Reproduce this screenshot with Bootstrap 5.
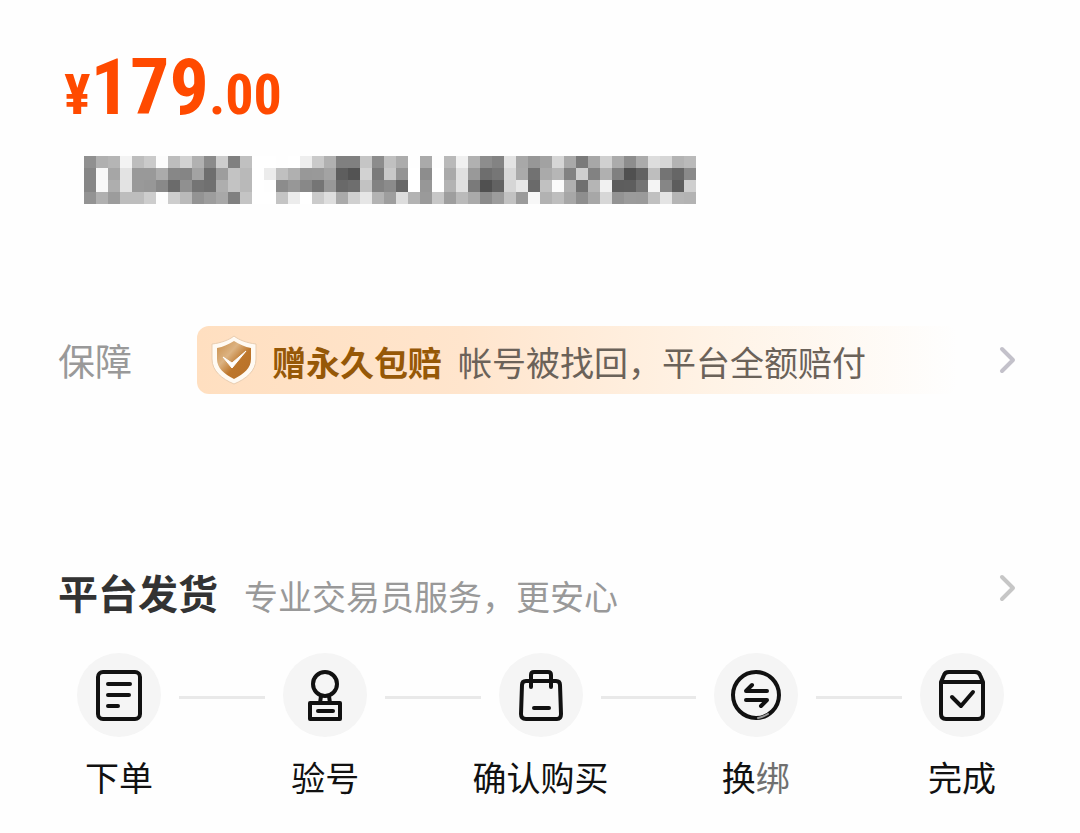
<!DOCTYPE html>
<html lang="zh-CN">
<head>
<meta charset="utf-8">
<meta name="viewport" content="width=device-width, initial-scale=1">
<title>商品详情</title>
<link href="https://cdn.jsdelivr.net/npm/bootstrap@5.3.0/dist/css/bootstrap.min.css" rel="stylesheet">
<style>
  body { font-family: "Noto Sans CJK SC", sans-serif; background: #fefefe; color: #111; }
  a { color: inherit; text-decoration: none; }
  .page { padding: 44px 64px 24px 58px; }
  .price { font-family: "Roboto Condensed", Roboto, sans-serif; font-weight: 700; color: #ff4a00; height: 88px; line-height: 88px; padding-left: 6px; }
  .price-yen { font-size: 56px; }
  .price-int { font-size: 78px; }
  .price-dec { font-size: 56px; }
  .item-title { margin: 24px 0 0 26px; height: 48px; }
  .guarantee { margin-top: 122px; }
  .row-label { font-size: 37px; line-height: 68px; color: #999; width: 139px; }
  .promise { height: 68px; border-radius: 12px; padding-left: 13px; font-size: 34px; line-height: 68px; color: #6b6259; background: linear-gradient(90deg, #ffdfc0 0%, #ffe5cd 35%, #fff3e6 68%, #fefefe 100%); margin-right: 40px; }
  .promise-text { padding-top: 4px; }
  .promise strong { color: #965807; margin: 0 16px 0 14px; }
  .delivery { margin-top: 164px; }
  .delivery h2 { font-size: 40px; line-height: 60px; font-weight: 700; color: #333; }
  .delivery-note { font-size: 34px; line-height: 60px; color: #999; margin-left: 26px; padding-top: 8px; }
  .steps { margin: 27px 12px 0 19px; gap: 18px; }
  .step { width: 84px; }
  .step-icon { width: 84px; height: 84px; border-radius: 50%; background: #f5f5f5; }
  .step-name { font-size: 34px; line-height: 48px; margin-top: 16px; white-space: nowrap; }
  .step-line { height: 3px; margin-top: 43px; background: #e9e9e9; flex: 86 1 0; }
  .step-line-long { flex-grow: 95; }
  .faded { color: #707070; }
</style>
</head>
<body>
<main class="page">
  <div class="price d-flex align-items-baseline"><span class="price-yen">¥</span><span class="price-int">179</span><span class="price-dec">.00</span></div>
  <div class="item-title"><svg id="mosaic" class="d-block" width="612" height="48" shape-rendering="crispEdges" aria-hidden="true"></svg></div>

  <a href="#guarantee" class="guarantee d-flex align-items-center">
    <span class="row-label flex-shrink-0">保障</span>
    <span class="promise d-flex align-items-center flex-grow-1 text-nowrap">
      <svg width="48" height="52" viewBox="0 0 48 52" aria-hidden="true">
        <defs>
          <linearGradient id="gold" x1="0" y1="0" x2="1" y2="1"><stop offset="0" stop-color="#c98d49"/><stop offset=".35" stop-color="#dcb382"/><stop offset=".6" stop-color="#bd762b"/><stop offset="1" stop-color="#b77029"/></linearGradient>
        </defs>
        <path d="M24 2C29 6 37 9 46 10V25C46 37 36 45 24 50C12 45 2 37 2 25V10C11 9 19 6 24 2Z" fill="#fffaf3" stroke="#e9cdb0" stroke-width="1"/>
        <path d="M24 7C29 10 35 13 41 14V25C41 34 34 40 24 45C14 40 7 34 7 25V14C13 13 19 10 24 7Z" fill="url(#gold)"/>
        <path d="M13 23L22 29L36 17L22 34Z" fill="#fff" stroke="#fff" stroke-width="1" stroke-linejoin="round"/>
      </svg>
      <span class="promise-text"><strong>赠永久包赔</strong>帐号被找回，平台全额赔付</span>
    </span>
    <svg width="18" height="28" viewBox="0 0 18 28" fill="none" stroke="#c3c1ca" stroke-width="4" stroke-linecap="round" stroke-linejoin="round" aria-hidden="true"><path d="M4 3L15 14L4 25"/></svg>
  </a>

  <a href="#delivery" class="delivery d-flex align-items-center">
    <h2 class="mb-0">平台发货</h2>
    <span class="delivery-note">专业交易员服务，更安心</span>
    <svg class="ms-auto mb-2" width="18" height="28" viewBox="0 0 18 28" fill="none" stroke="#c6c6c6" stroke-width="4" stroke-linecap="round" stroke-linejoin="round" aria-hidden="true"><path d="M4 3L15 14L4 25"/></svg>
  </a>

  <div class="steps d-flex align-items-start" id="delivery">
    <div class="step d-flex flex-column align-items-center">
      <div class="step-icon d-flex align-items-center justify-content-center">
        <svg width="52" height="52" viewBox="0 0 52 52" fill="none" stroke="#111" stroke-width="4" stroke-linecap="round" stroke-linejoin="round" aria-hidden="true"><rect x="5" y="3" width="42" height="47" rx="5"/><path d="M15 15H37M15 26H36M15 37H25"/></svg>
      </div>
      <span class="step-name">下单</span>
    </div>
    <div class="step-line"></div>
    <div class="step d-flex flex-column align-items-center">
      <div class="step-icon d-flex align-items-center justify-content-center">
        <svg width="52" height="52" viewBox="0 0 52 52" fill="none" stroke="#111" stroke-width="4" stroke-linejoin="round" aria-hidden="true"><circle cx="26" cy="15" r="12"/><path d="M22 27L21 34M30 27L31 34"/><rect x="11" y="34" width="30" height="16"/><path d="M19 42H34" stroke-linecap="round"/></svg>
      </div>
      <span class="step-name">验号</span>
    </div>
    <div class="step-line step-line-long"></div>
    <div class="step d-flex flex-column align-items-center">
      <div class="step-icon d-flex align-items-center justify-content-center">
        <svg width="52" height="52" viewBox="0 0 52 52" fill="none" stroke="#111" stroke-width="4" stroke-linecap="round" stroke-linejoin="round" aria-hidden="true"><path d="M11 12H41Q45 12 45 16L46 45Q46 50 42 50H11Q6 50 6 45L7 16Q7 12 11 12Z"/><path d="M16 18V6Q16 3 19 3H33Q36 3 36 6V18M19 39H34"/></svg>
      </div>
      <span class="step-name">确认购买</span>
    </div>
    <div class="step-line step-line-long"></div>
    <div class="step d-flex flex-column align-items-center">
      <div class="step-icon d-flex align-items-center justify-content-center">
        <svg width="52" height="52" viewBox="0 0 52 52" fill="none" stroke="#111" stroke-width="4" stroke-linecap="round" stroke-linejoin="round" aria-hidden="true"><circle cx="26" cy="26" r="23"/><path d="M37 22H16L22 16M16 31H37L31 37"/><path d="M28 49Q33 48 38 45" stroke="#999" stroke-width="2"/></svg>
      </div>
      <span class="step-name">换<span class="faded">绑</span></span>
    </div>
    <div class="step-line"></div>
    <div class="step d-flex flex-column align-items-center">
      <div class="step-icon d-flex align-items-center justify-content-center">
        <svg width="52" height="52" viewBox="0 0 52 52" fill="none" stroke="#111" stroke-width="4" stroke-linecap="round" stroke-linejoin="round" aria-hidden="true"><path d="M5 13L8 6Q9 3 13 3H39Q43 3 44 6L47 13V45Q47 50 42 50H10Q5 50 5 45ZM5 13H47M16 28L25 37L37 23"/></svg>
      </div>
      <span class="step-name">完成</span>
    </div>
  </div>
</main>
<script src="https://cdn.jsdelivr.net/npm/bootstrap@5.3.0/dist/js/bootstrap.bundle.min.js"></script>
<script>
  // Grey level of each 12px tile of the hidden title, row by row.
  const tiles = [
    '90 b0 b5 f3 bd ca fc bd d2 b1 8b cd 80 c0 ff ff fe ff ee ca b1 80 80 c5 8c c0 ac fe aa fd b9 f0 b1 8d 83 e3 a8 97 a2 d6 a9 7a a7 d0 ab 8d ab dd d6 b3 ba',
    '86 f8 a6 e3 99 99 ab 87 85 a3 6e 9d c3 b9 ff ec c0 b0 98 99 a3 5e 53 d2 7a c8 94 ff 8d ff aa e0 99 6e 76 d8 aa 72 aa b6 82 cf 82 b0 80 50 62 be 74 66 8a',
    '86 f8 ae e3 99 97 89 6b 90 74 70 ae c3 b9 ff fe 8c 97 88 75 98 69 6e c2 82 8b 68 ff 97 ff b3 e0 7a 50 62 d6 e7 6a c1 fb b0 70 b5 f1 5d 5e 74 f4 86 5d cf',
    '93 b0 9c bd bd cd fd cd ba 93 9d a8 80 c4 ff ff c4 ec ff cb de aa d0 e6 b3 9e dd b3 9a c7 9e ba aa 8b 9c c2 9b f7 b2 be a7 8e a7 d7 93 9b 9a c0 e4 b5 b3'
  ];
  document.getElementById('mosaic').innerHTML = tiles.map((row, y) =>
    row.split(' ').map((g, x) => `<rect x="${x * 12}" y="${y * 12}" width="12" height="12" fill="#${g}${g}${g}"/>`).join('')
  ).join('');
</script>
</body>
</html>
